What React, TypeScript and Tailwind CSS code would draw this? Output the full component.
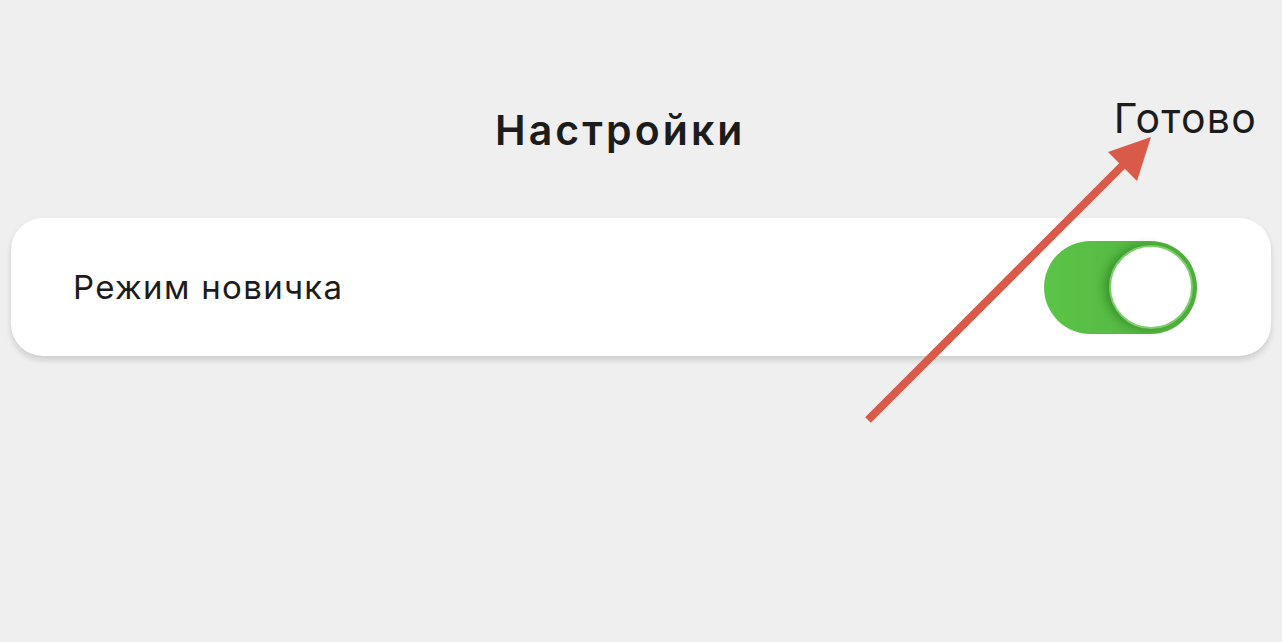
export default function App() {
  return (
    <div className="relative min-h-screen w-full bg-[#efefef] font-['Inter','Liberation_Sans',sans-serif] text-[#1c1c1c]">
      <div className="flex items-start pr-[25px] pt-[98px]">
        <h1 className="ml-[495px] mt-[12px] text-[41px] font-semibold leading-none tracking-[0.075em]">
          Настройки
        </h1>
        <button className="ml-auto text-[41px] leading-none tracking-[0.03em]">Готово</button>
      </div>

      <div className="mx-[11px] mt-[67px] flex h-[138px] items-center justify-between rounded-[32px] bg-white pl-[62px] pr-[74px] shadow-[0_4px_6px_rgba(0,0,0,0.14)]">
        <span className="text-[33px] leading-none tracking-[0.04em]">Режим новичка</span>
        <div className="flex h-[93px] w-[153px] items-center justify-end rounded-full bg-gradient-to-r from-[#5cc449] to-[#4fb03c] pr-[4px]">
          <div className="h-[84px] w-[84px] rounded-full border-2 border-[#7ed06d] bg-white shadow-[-5px_0_8px_rgba(0,60,0,0.3)]" />
        </div>
      </div>

      <svg
        className="pointer-events-none absolute left-0 top-0"
        width="1282"
        height="642"
        viewBox="0 0 1282 642"
      >
        <line x1="868" y1="420" x2="1128" y2="160" stroke="#d95a48" strokeWidth="8" />
        <polygon points="1151,137 1108,152 1137,181" fill="#d95a48" />
      </svg>
    </div>
  );
}
